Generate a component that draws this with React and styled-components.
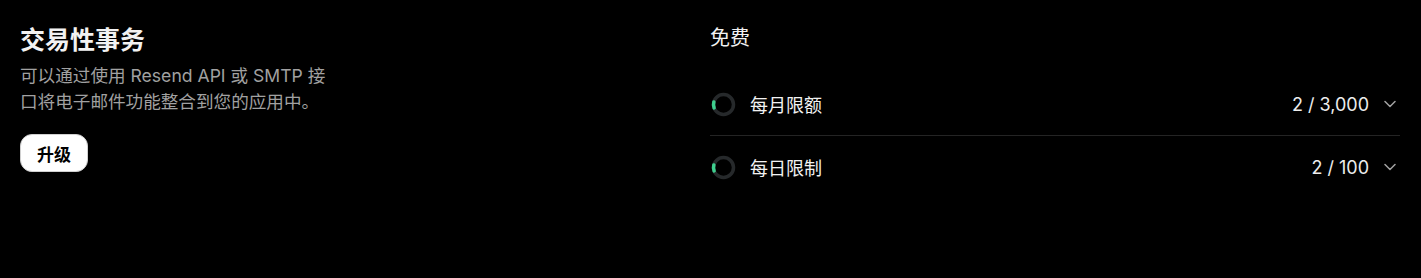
import React from "react";
import styled, { createGlobalStyle } from "styled-components";

const Global = createGlobalStyle`
  html, body {
    margin: 0;
    padding: 0;
    background: #000;
  }
  body {
    font-family: "Inter", "Noto Sans CJK SC", sans-serif;
    color: #ededed;
    -webkit-font-smoothing: antialiased;
  }
`;

const Page = styled.div`
  display: grid;
  grid-template-columns: 690px 1fr;
  padding: 24px 21px 0 20px;
  background: #000;
  min-height: 254px;
`;

const Left = styled.section`
  display: flex;
  flex-direction: column;
  align-items: flex-start;
`;

const Title = styled.h2`
  margin: 0;
  font-size: 25px;
  line-height: 32px;
  font-weight: 700;
  color: #f2f2f2;
`;

const Description = styled.p`
  margin: 7px 0 0;
  width: 312px;
  font-size: 17.6px;
  line-height: 26px;
  color: #a1a1a1;
`;

const UpgradeButton = styled.button`
  margin-top: 19px;
  height: 38px;
  padding: 0 16px;
  border: 1px solid #d0d0d0;
  border-radius: 12px;
  background: #fff;
  color: #000;
  font-family: inherit;
  font-size: 17px;
  font-weight: 700;
  cursor: pointer;
`;

const Right = styled.section`
  display: flex;
  flex-direction: column;
`;

const PlanName = styled.h3`
  margin: 0 0 21px;
  font-size: 20px;
  line-height: 28px;
  font-weight: 400;
  color: #f2f2f2;
`;

const Row = styled.div`
  display: flex;
  align-items: center;
  height: 62px;
  border-top: ${(p) => (p.$divider ? "1px solid #242424" : "none")};
`;

const Label = styled.span`
  margin-left: 14px;
  font-size: 18px;
  color: #f2f2f2;
  flex: 1;
`;

const Value = styled.span`
  font-size: 18px;
  color: #ededed;
`;

const Chevron = styled.span`
  display: flex;
  align-items: center;
  margin-left: 15px;
  margin-right: 4px;
  color: #a1a1a1;
`;

const RingWrap = styled.span`
  display: flex;
  width: 25px;
  height: 25px;
  margin-left: 1px;
`;

function Ring() {
  const cx = 12.5;
  const cy = 12.5;
  const r = 10;
  const a1 = (160 * Math.PI) / 180;
  const a2 = (195 * Math.PI) / 180;
  const x1 = cx + r * Math.cos(a1);
  const y1 = cy + r * Math.sin(a1);
  const x2 = cx + r * Math.cos(a2);
  const y2 = cy + r * Math.sin(a2);
  return (
    <RingWrap>
      <svg width="25" height="25" viewBox="0 0 25 25">
        <circle cx={cx} cy={cy} r={r} fill="none" stroke="#26292b" strokeWidth="3.5" />
        <path
          d={`M ${x1} ${y1} A ${r} ${r} 0 0 1 ${x2} ${y2}`}
          fill="none"
          stroke="#3ecf8e"
          strokeWidth="3.5"
          strokeLinecap="round"
        />
      </svg>
    </RingWrap>
  );
}

function ChevronDown() {
  return (
    <Chevron>
      <svg width="12" height="8" viewBox="0 0 12 8">
        <path d="M1 1.5 L6 6.5 L11 1.5" fill="none" stroke="currentColor" strokeWidth="1.5" strokeLinecap="round" strokeLinejoin="round" />
      </svg>
    </Chevron>
  );
}

const limits = [
  { label: "每月限额", value: "2 / 3,000" },
  { label: "每日限制", value: "2 / 100" },
];

export default function App() {
  return (
    <>
      <Global />
      <Page>
        <Left>
          <Title>交易性事务</Title>
          <Description>
            可以通过使用 Resend API 或 SMTP 接口将电子邮件功能整合到您的应用中。
          </Description>
          <UpgradeButton>升级</UpgradeButton>
        </Left>
        <Right>
          <PlanName>免费</PlanName>
          {limits.map((l, i) => (
            <Row key={l.label} $divider={i > 0}>
              <Ring />
              <Label>{l.label}</Label>
              <Value>{l.value}</Value>
              <ChevronDown />
            </Row>
          ))}
        </Right>
      </Page>
    </>
  );
}
